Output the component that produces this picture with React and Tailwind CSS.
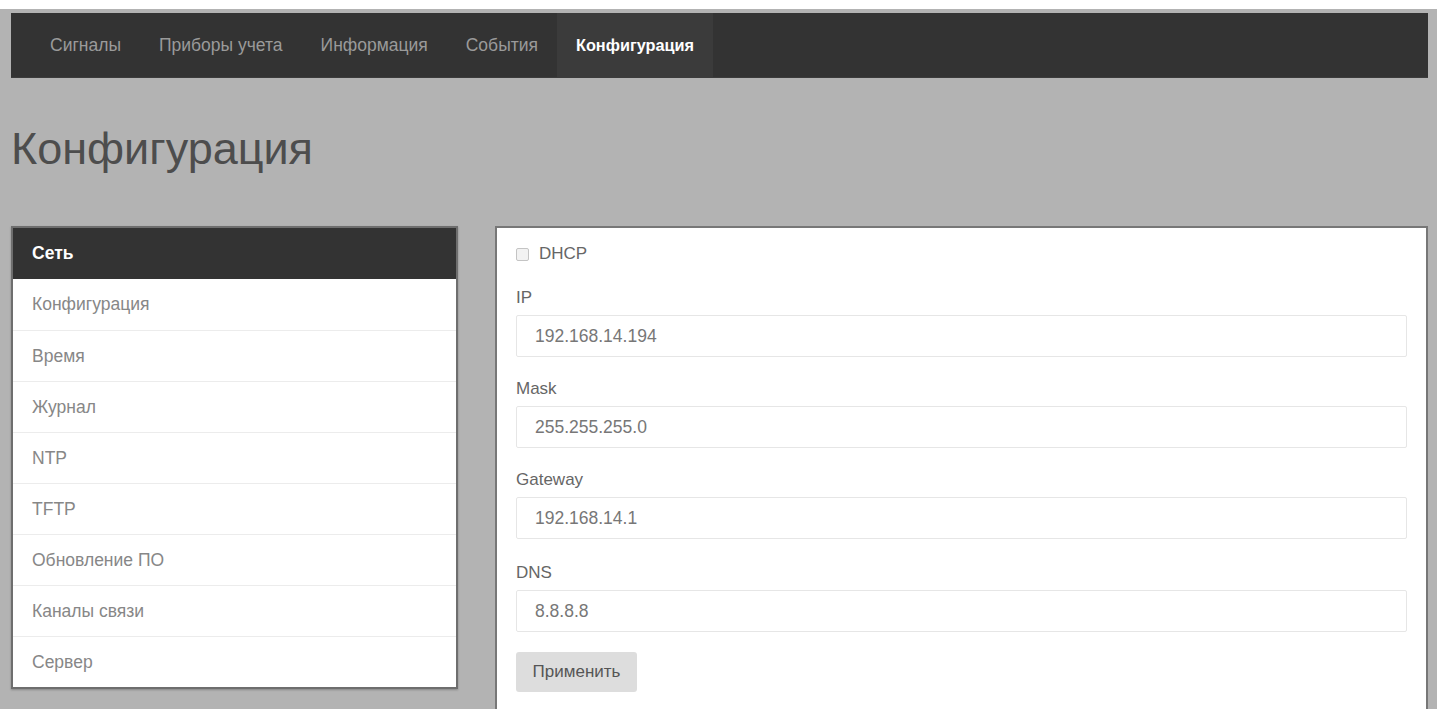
import { useState } from 'react';

const tabs = ['Сигналы', 'Приборы учета', 'Информация', 'События', 'Конфигурация'];
const sections = ['Конфигурация', 'Время', 'Журнал', 'NTP', 'TFTP', 'Обновление ПО', 'Каналы связи', 'Сервер'];

const fields = [
  { label: 'IP', value: '192.168.14.194', gap: 'mt-[24px]' },
  { label: 'Mask', value: '255.255.255.0', gap: 'mt-[22px]' },
  { label: 'Gateway', value: '192.168.14.1', gap: 'mt-[22px]' },
  { label: 'DNS', value: '8.8.8.8', gap: 'mt-[24px]' },
];

export default function App() {
  const [dhcp, setDhcp] = useState(false);
  const active = 'Конфигурация';

  return (
    <div className="min-h-screen bg-white pt-[9px] font-['Liberation_Sans',Arial,sans-serif]">
      <div className="min-h-[700px] bg-[#b3b3b3] pl-[11px] pr-[9px] pt-[4px]">
        <nav className="flex h-[65px] items-stretch bg-[#333333] pl-[20px] border-b border-[#3c3c3c]">
          {tabs.map((t) => (
            <a
              key={t}
              className={
                t === active
                  ? 'flex items-center bg-[#3b3b3b] px-[19px] text-[16.3px] font-bold text-white'
                  : 'flex items-center px-[19px] text-[17.5px] text-[#9a9a9a]'
              }
            >
              {t}
            </a>
          ))}
        </nav>

        <h1 className="mt-[46px] h-[50px] text-[45px] leading-[50px] text-[#4d4d4d]">Конфигурация</h1>

        <div className="mt-[52px] flex items-start gap-[37px]">
          {/* section list */}
          <div className="w-[447px] shrink-0 border-2 border-[#6e6e6e] bg-white shadow-[0_1px_2px_rgba(0,0,0,0.25)]">
            <div className="flex h-[51px] items-center bg-[#333333] px-[19px] text-[17.5px] font-bold text-white">Сеть</div>
            {sections.map((s, i) => (
              <div
                key={s}
                className={
                  'flex h-[51px] items-center px-[19px] text-[17.5px] text-[#878787]' +
                  (i > 0 ? ' border-t border-[#ececec]' : '')
                }
              >
                {s}
              </div>
            ))}
          </div>

          {/* network form */}
          <div className="min-h-[520px] flex-1 border-2 border-[#777777] bg-white px-[19px] pt-[16px]">
            <label className="flex h-[20px] items-center gap-[10px] text-[17px] text-[#666666]">
              <input
                type="checkbox"
                checked={dhcp}
                onChange={(e) => setDhcp(e.target.checked)}
                className="h-[13px] w-[13px] appearance-none rounded-[2px] border border-[#c4c4c4] bg-[#f2f2f2]"
              />
              DHCP
            </label>

            {fields.map((f) => (
              <div key={f.label} className={f.gap}>
                <div className="h-[20px] text-[17px] leading-[20px] text-[#666666]">{f.label}</div>
                <input
                  readOnly
                  value={f.value}
                  className="mt-[7px] h-[42px] w-full rounded-[2px] border border-[#e6e6e6] px-[18px] text-[17.5px] text-[#777777] outline-none"
                />
              </div>
            ))}

            <button className="mt-[20px] h-[40px] w-[121px] rounded-[3px] bg-[#dddddd] text-[17px] text-[#555555]">
              Применить
            </button>
          </div>
        </div>
      </div>
    </div>
  );
}
